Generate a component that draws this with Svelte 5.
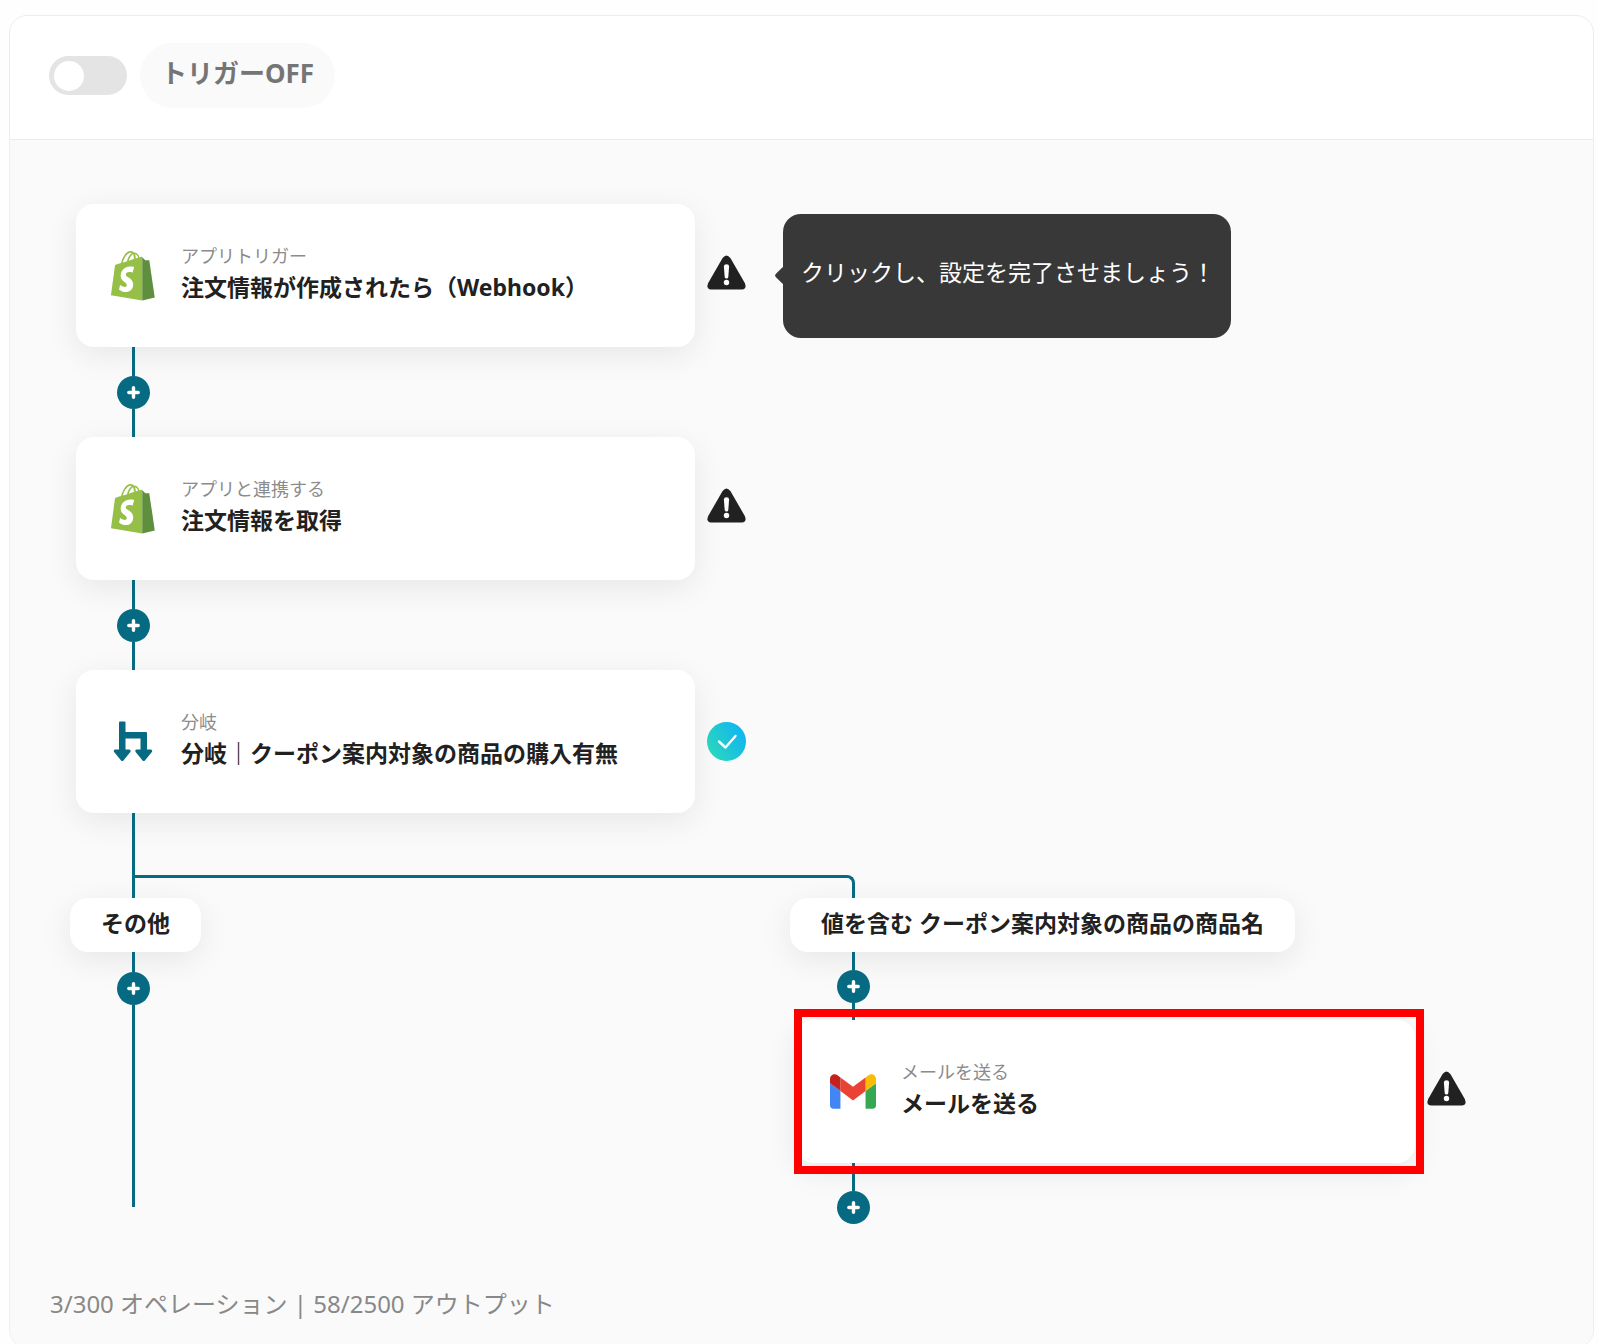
<script>
  let triggerOn = $state(false);

  const steps = [
    {
      icon: "shopify",
      kind: "アプリトリガー",
      title: "注文情報が作成されたら（Webhook）",
      status: "warning",
      hint: "クリックし、設定を完了させましょう！",
    },
    {
      icon: "shopify",
      kind: "アプリと連携する",
      title: "注文情報を取得",
      status: "warning",
    },
    {
      icon: "branch",
      kind: "分岐",
      title: "分岐｜クーポン案内対象の商品の購入有無",
      status: "done",
    },
  ];

  const mailStep = {
    icon: "gmail",
    kind: "メールを送る",
    title: "メールを送る",
    status: "warning",
    selected: true,
  };

  const usage = {
    operations: "3/300",
    outputs: "58/2500",
  };
</script>

{#snippet appIcon(name)}
  {#if name === "shopify"}
    <svg width="44" height="50" viewBox="0 0 110 125" aria-hidden="true">
      <path
        fill="#95bf47"
        fill-rule="evenodd"
        d="M74.7 14.8s-1.4.4-3.7 1.1c-.4-1.3-1-2.8-1.8-4.4-2.6-5-6.5-7.7-11.1-7.7-.3 0-.6 0-1 .1-.1-.2-.3-.3-.4-.5-2-2.2-4.6-3.2-7.7-3.1-6 .2-12 4.5-16.8 12.2-3.4 5.4-6 12.2-6.7 17.5-6.9 2.1-11.7 3.6-11.8 3.7-3.5 1.1-3.6 1.2-4 4.5C9.4 40.7 0 110.8 0 110.8l78.1 13.1V14.6c-1.6 0-2.7.1-3.4.2zM57.2 20.2c-4 1.2-8.4 2.6-12.7 3.9 1.2-4.7 3.6-9.4 6.4-12.5 1.1-1.1 2.6-2.4 4.3-3.2 1.7 3.6 2.1 8.5 2 11.8zM49.1 4.3c1.4 0 2.6.3 3.6.9-1.6.8-3.2 2.1-4.7 3.6-3.8 4.1-6.7 10.5-7.9 16.6-3.6 1.1-7.2 2.2-10.5 3.2 2.1-9.5 10.2-24 19.5-24.3zM61.9 18.8c0-3-.4-7.3-1.8-10.9 4.6.9 6.8 6 7.8 9.1-1.8.5-3.8 1.1-6 1.8z"
      />
      <path
        fill="#5e8e3e"
        d="M78.1 123.9l31.4-7.8S96 24.8 95.9 24.2c-.1-.6-.6-1-1.1-1s-9.3-.2-9.3-.2-5.4-5.2-7.4-7.2z"
      />
      <path
        fill="#fff"
        d="M57.8 39.9L54 54.3s-4.3-2-9.4-1.6c-7.5.5-7.5 5.2-7.5 6.4.4 6.4 17.3 7.8 18.3 22.9.7 11.9-6.3 20-16.4 20.6-12.2.8-18.9-6.4-18.9-6.4l2.6-11s6.7 5.1 12.1 4.7c3.5-.2 4.8-3.1 4.7-5.1-.5-8.4-14.3-7.9-15.2-21.7-.7-11.6 6.9-23.4 23.7-24.4 6.5-.4 9.8 1.2 9.8 1.2z"
      />
    </svg>
  {:else if name === "gmail"}
    <svg width="46" height="35" viewBox="52 42 88 66" aria-hidden="true">
      <path fill="#4285f4" d="M58 108h14V74L52 59v43c0 3.32 2.69 6 6 6" />
      <path fill="#34a853" d="M120 108h14c3.32 0 6-2.69 6-6V59l-20 15" />
      <path fill="#fbbc04" d="M120 48v26l20-15v-8c0-7.42-8.47-11.65-14.4-7.2" />
      <path fill="#ea4335" d="M72 74V48l24 18 24-18v26L96 92" />
      <path fill="#c5221f" d="M52 51v8l20 15V48l-5.6-4.2c-5.94-4.45-14.4-.22-14.4 7.2" />
    </svg>
  {:else}
    <svg width="40" height="42" viewBox="0 0 40 42" aria-hidden="true">
      <g fill="#066b82" stroke="#066b82" stroke-linejoin="round">
        <path stroke-width="2" d="M7 1.5h4.5V12H33v18h-4.5V16.5h-17V30H7z" />
        <path stroke-width="3" d="M2.3 30h13.9l-6.95 8.5zM23.8 30h13.9l-6.95 8.5z" />
      </g>
    </svg>
  {/if}
{/snippet}

{#snippet addButton()}
  <button class="add" type="button" aria-label="ステップを追加">
    <svg width="13" height="13" viewBox="0 0 13 13" aria-hidden="true">
      <path d="M6.5 1.8v9.4M1.8 6.5h9.4" stroke="#fff" stroke-width="3.4" stroke-linecap="round" />
    </svg>
  </button>
{/snippet}

{#snippet stepRow(step)}
  <div class="step">
    <div class="card-wrap" class:selected={step.selected}>
      <button class="card" type="button">
        <span class="card-icon">{@render appIcon(step.icon)}</span>
        <span class="card-text">
          <span class="kind">{step.kind}</span>
          <span class="title">{step.title}</span>
        </span>
      </button>
    </div>
    {#if step.status === "warning"}
      <svg class="status" viewBox="0 0 39 39" role="img" aria-label="未設定">
        <path
          fill="#212121"
          d="M15.6 2Q19.5-3.200 23.400 2L37.800 27Q40.200 33 35 33.500H4Q-1.200 33 1.200 27z"
        />
        <path fill="#fff" d="M16.9 10.500q0-2.200 2.600-2.200t2.600 2.200l-.8 10.500q-.2 1.500-1.800 1.500t-1.800-1.500z" />
        <circle cx="19.5" cy="26.500" r="2.700" fill="#fff" />
      </svg>
    {:else}
      <svg class="status" viewBox="0 0 39 39" role="img" aria-label="設定済み">
        <defs>
          <linearGradient id="done" x1="0" y1="0.8" x2="1" y2="0.2">
            <stop offset="0" stop-color="#2bd9b9" />
            <stop offset="0.9" stop-color="#12b7ee" />
          </linearGradient>
        </defs>
        <circle cx="19.5" cy="19.5" r="19.5" fill="url(#done)" />
        <path
          d="M12 19.5l6.5 6L28.5 14"
          fill="none"
          stroke="#fff"
          stroke-width="2.4"
          stroke-linecap="round"
          stroke-linejoin="round"
        />
      </svg>
    {/if}
    {#if step.hint}
      <div class="hint" role="tooltip">{step.hint}</div>
    {/if}
  </div>
{/snippet}

<main class="panel">
  <header>
    <input id="trigger" type="checkbox" role="switch" bind:checked={triggerOn} />
    <label for="trigger">トリガー{triggerOn ? "ON" : "OFF"}</label>
  </header>

  <section class="canvas">
    {#each steps as step, i}
      {@render stepRow(step)}
      {#if i < steps.length - 1}
        <div class="connector between">
          <span class="line"></span>
          {@render addButton()}
          <span class="line"></span>
        </div>
      {/if}
    {/each}

    <div class="fork"><div class="arm"></div></div>

    <div class="branches">
      <div class="branch">
        <div class="condition">その他</div>
        <div class="connector rest">
          <span class="stub"></span>
          {@render addButton()}
          <span class="line"></span>
        </div>
      </div>

      <div class="branch">
        <div class="condition">値を含む クーポン案内対象の商品の商品名</div>
        <div class="connector short">
          <span class="line"></span>
          {@render addButton()}
          <span class="line"></span>
        </div>
        {@render stepRow(mailStep)}
        <div class="connector tail">
          <span class="line"></span>
          {@render addButton()}
        </div>
      </div>
    </div>

    <p class="usage">{usage.operations} オペレーション | {usage.outputs} アウトプット</p>
  </section>
</main>

<style>
  :global(body) {
    background: #fefefe;
    font-family: "Noto Sans", "Noto Sans CJK JP", sans-serif;
    color: #212121;
  }
  .panel {
    margin: 15px 4px 0 9px;
    border: 1px solid #ededed;
    border-radius: 18px;
    background: #fff;
    overflow: hidden;
  }
  button {
    font: inherit;
    color: inherit;
    border: 0;
    cursor: pointer;
  }

  /* header */
  header {
    display: flex;
    align-items: center;
    gap: 13px;
    padding: 27px 39px 31px;
    border-bottom: 1px solid #ebebeb;
  }
  header input {
    appearance: none;
    display: flex;
    align-items: center;
    width: 78px;
    height: 39px;
    margin: 0;
    padding: 0 5px;
    border-radius: 20px;
    background: #e4e4e4;
    cursor: pointer;
  }
  header input::before {
    content: "";
    width: 30px;
    height: 30px;
    border-radius: 50%;
    background: #fff;
  }
  header input:checked {
    justify-content: flex-end;
    background: #066b82;
  }
  header label {
    padding: 10px 21px 15px;
    border-radius: 33px;
    background: #fafafa;
    color: #757575;
    font-size: 26px;
    font-weight: 700;
    line-height: 40px;
  }

  /* flow */
  .canvas {
    padding: 64px 60px 27px;
    background: #fafafa;
  }
  .step {
    display: flex;
    align-items: center;
    gap: 12px;
    padding-left: 6px;
  }
  .card-wrap {
    position: relative;
    flex: 0 1 619px;
  }
  .card {
    display: flex;
    align-items: center;
    gap: 24px;
    width: 100%;
    height: 143px;
    padding: 0 33px;
    border-radius: 18px;
    background: #fff;
    box-shadow: 0 8px 32px rgba(0, 0, 0, 0.08);
    text-align: left;
  }
  .selected::after {
    content: "";
    position: absolute;
    z-index: 2;
    inset: -11px -9px -11px -2px;
    border: 8px solid #f00;
    pointer-events: none;
  }
  .card-icon {
    display: flex;
    flex: none;
    justify-content: center;
    width: 48px;
  }
  .card-text {
    display: flex;
    flex-direction: column;
    padding-bottom: 6px;
    white-space: nowrap;
  }
  .kind {
    color: #8b8b8b;
    font-size: 18px;
    line-height: 28px;
  }
  .title {
    font-size: 23px;
    font-weight: 700;
    line-height: 34px;
  }
  .status {
    position: relative;
    flex: none;
    width: 39px;
    height: 39px;
    overflow: visible;
  }
  .hint {
    position: relative;
    margin-left: 25px;
    padding: 38px 16px 46px 18px;
    border-radius: 18px;
    background: #383838;
    color: #fff;
    font-size: 23px;
    line-height: 40px;
    white-space: nowrap;
  }
  .hint::before {
    content: "";
    position: absolute;
    top: 55px;
    left: -6px;
    width: 13px;
    height: 13px;
    border-radius: 2px;
    background: #383838;
    transform: rotate(45deg);
  }

  /* connectors */
  .connector {
    position: relative;
    z-index: 1;
    display: flex;
    flex-direction: column;
    align-items: center;
    width: 33px;
    margin-left: 47px;
  }
  .between {
    height: 90px;
  }
  .short {
    height: 68px;
  }
  .tail {
    height: 61px;
  }
  .rest {
    flex: 1;
    margin-bottom: 17px;
  }
  .line,
  .stub {
    width: 3px;
    background: #066b82;
  }
  .line {
    flex: 1;
  }
  .stub {
    height: 20px;
  }
  .add {
    display: flex;
    flex: none;
    align-items: center;
    justify-content: center;
    width: 33px;
    height: 33px;
    padding: 0;
    border-radius: 50%;
    background: #066b82;
  }

  /* branches */
  .fork {
    position: relative;
    z-index: 1;
    box-sizing: border-box;
    width: 723px;
    height: 85px;
    margin-left: 62px;
    padding-top: 62px;
    border-left: 3px solid #066b82;
  }
  .arm {
    box-sizing: border-box;
    height: 100%;
    border: solid #066b82;
    border-width: 3px 3px 0 0;
    border-radius: 0 8px 0 0;
  }
  .branches {
    display: grid;
    grid-template-columns: 720px 1fr;
  }
  .branch {
    display: flex;
    flex-direction: column;
  }
  .condition {
    align-self: flex-start;
    padding: 7px 31px 11px;
    border-radius: 18px;
    background: #fff;
    box-shadow: 0 8px 32px rgba(0, 0, 0, 0.08);
    font-size: 23px;
    font-weight: 700;
    line-height: 36px;
    white-space: nowrap;
  }
  .usage {
    margin: 64px 0 0 -20px;
    color: #888;
    font-size: 24px;
    line-height: 32px;
  }
</style>
